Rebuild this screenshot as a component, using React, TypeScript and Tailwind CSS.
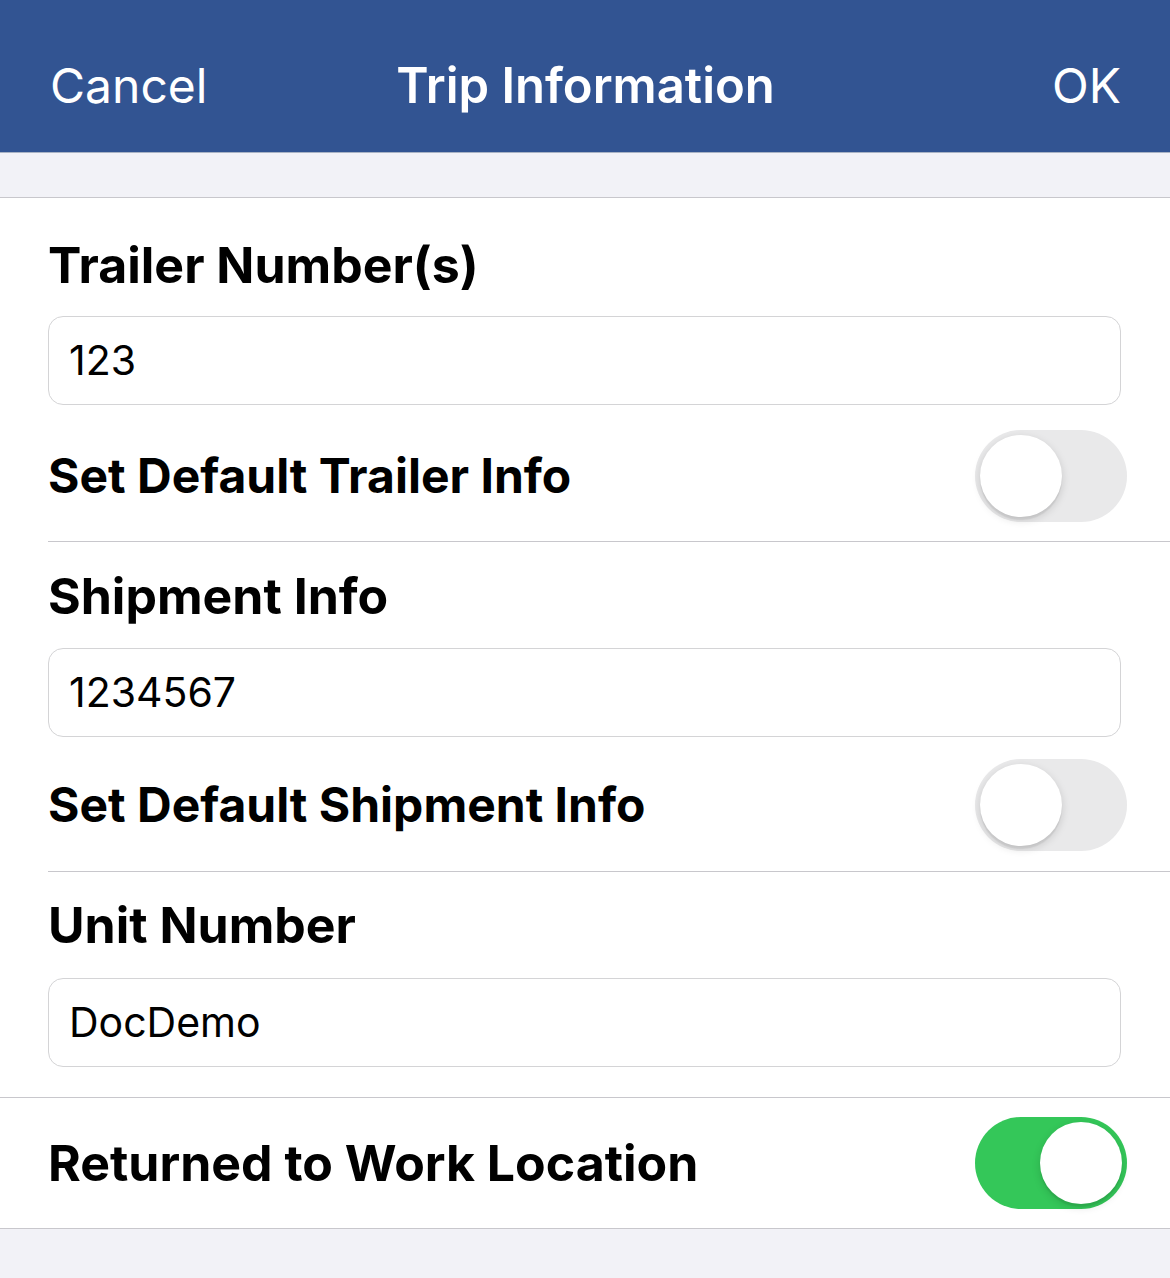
import React from "react";

const font = { fontFamily: "Inter, 'Noto Sans', sans-serif" };

function Toggle({ on }: { on: boolean }) {
  return (
    <div
      className={
        on
          ? "w-[152px] h-[92px] rounded-full bg-[#34c759] flex items-center justify-end px-[5px] shrink-0"
          : "w-[152px] h-[92px] rounded-full bg-[#e9e9ea] flex items-center justify-start px-[5px] shrink-0"
      }
    >
      <div className="w-[82px] h-[82px] rounded-full bg-white shadow-[0_3px_8px_rgba(0,0,0,0.15),0_3px_1px_rgba(0,0,0,0.06)]" />
    </div>
  );
}

function Field({ value }: { value: string }) {
  return (
    <div className="h-[89px] mr-[49px] rounded-[15px] border border-[#d4d4d6] bg-white flex items-center px-[20px] text-[41px] text-black">
      {value}
    </div>
  );
}

export default function App() {
  return (
    <div className="w-[1170px] h-[1278px] bg-[#f2f2f7] flex flex-col" style={font}>
      <div className="h-[153px] shrink-0 bg-[#325492] border-b border-[#a9b3c4] grid grid-cols-[1fr_auto_1fr] items-center pl-[50px] pr-[49px] pt-[20px] text-white text-[48px] leading-[60px]">
        <div className="justify-self-start">Cancel</div>
        <div className="font-semibold text-[49px]">Trip Information</div>
        <div className="justify-self-end">OK</div>
      </div>
      <div className="h-[45px] shrink-0 border-b border-[#c8c7cc]" />
      <div className="bg-white">
        <div className="pl-[48px]">
          <div className="border-b border-[#c8c7cc] pt-[37px] pb-[19px]">
            <div className="text-[50px] leading-[60px] font-bold text-black">Trailer Number(s)</div>
            <div className="mt-[21px]">
              <Field value="123" />
            </div>
            <div className="mt-[25px] h-[92px] flex items-center justify-between pr-[43px]">
              <div className="text-[48px] font-bold text-black">Set Default Trailer Info</div>
              <Toggle on={false} />
            </div>
          </div>
          <div className="border-b border-[#c8c7cc] pt-[24px] pb-[20px]">
            <div className="text-[50px] leading-[60px] font-bold text-black">Shipment Info</div>
            <div className="mt-[22px]">
              <Field value="1234567" />
            </div>
            <div className="mt-[22px] h-[92px] flex items-center justify-between pr-[43px]">
              <div className="text-[48px] font-bold text-black">Set Default Shipment Info</div>
              <Toggle on={false} />
            </div>
          </div>
          <div className="pt-[23px] pb-[30px]">
            <div className="text-[50px] leading-[60px] font-bold text-black">Unit Number</div>
            <div className="mt-[23px]">
              <Field value="DocDemo" />
            </div>
          </div>
        </div>
        <div className="border-t border-b border-[#c8c7cc] h-[132px] flex items-center justify-between pl-[48px] pr-[43px]">
          <div className="text-[50px] font-bold text-black">Returned to Work Location</div>
          <Toggle on={true} />
        </div>
      </div>
    </div>
  );
}
